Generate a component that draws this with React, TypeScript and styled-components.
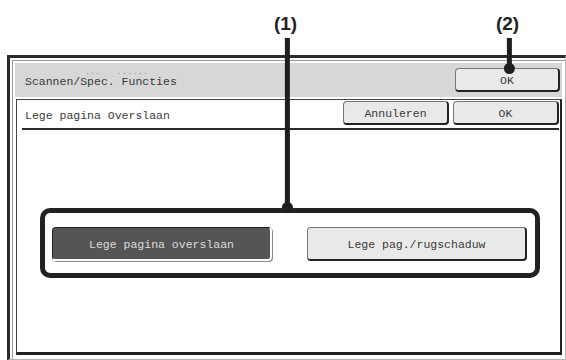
import styled, { createGlobalStyle, css } from "styled-components";

const Global = createGlobalStyle`
  html, body {
    margin: 0;
    padding: 0;
    background: #ffffff;
  }
  body {
    width: 566px;
    height: 360px;
    overflow: hidden;
    font-family: "Liberation Mono", "DejaVu Sans Mono", monospace;
    color: #3a3a3a;
  }
`;

const Page = styled.div`
  position: relative;
  width: 566px;
  height: 360px;
  padding: 55px 0 0 7px;
  box-sizing: border-box;
`;

const Frame = styled.div`
  width: 559px;
  height: 305px;
  box-sizing: border-box;
  display: flex;
  flex-direction: column;
  gap: 2px;
  padding: 5px 3px 4px 5px;
  border-top: 3px solid #2b2b2b;
  border-left: 3px solid #2b2b2b;
  border-right: 1px solid #b5b5b5;
  border-bottom: 1px solid #b5b5b5;
  box-shadow: inset 2px 2px 0 #ffffff, inset 3px 3px 0 #9a9a9a;
`;

const Header = styled.div`
  height: 34px;
  flex: none;
  display: flex;
  align-items: center;
  justify-content: space-between;
  padding: 0 2px 0 10px;
  background: #d7d7d7;
`;

const Title = styled.div`
  display: flex;
  flex-direction: column;
  margin-top: -5px;
  font-size: 11.5px;
  line-height: 13px;
`;

const Ruby = styled.div`
  height: 7px;
  font-size: 8px;
  line-height: 7px;
  color: #8c8c8c;
  letter-spacing: 0.5px;
  white-space: pre;
  padding-left: 60px;
`;

const Button = styled.div<{ $w: number; $h: number; $dark?: boolean }>`
  width: ${(p) => p.$w}px;
  height: ${(p) => p.$h}px;
  box-sizing: border-box;
  display: flex;
  align-items: center;
  justify-content: center;
  padding-top: 2px;
  font-size: 11.5px;
  border-radius: 4px;
  ${(p) =>
    p.$dark
      ? css`
          background: #555555;
          color: #dcdcdc;
          border: 1px solid #222222;
          border-right: 2px solid #ffffff;
          border-bottom: 2px solid #ffffff;
          box-shadow: 1px 1px 0 #8a8a8a;
        `
      : css`
          background: #e9e9e9;
          color: #3a3a3a;
          border: 1px solid #777777;
          border-right: 2px solid #222222;
          border-bottom: 2px solid #222222;
        `}
`;

const Panel = styled.div`
  flex: 1;
  display: flex;
  flex-direction: column;
  margin-left: 1px;
  background: #ffffff;
  border-top: 1px solid #444444;
  border-left: 1px solid #444444;
  border-right: 2px solid #222222;
  border-bottom: 3px solid #222222;
`;

const PanelHead = styled.div`
  height: 27px;
  display: flex;
  align-items: flex-start;
  padding: 1px 1px 0 8px;
  gap: 4px;
  font-size: 11.5px;
`;

const PanelTitle = styled.div`
  flex: 1;
  padding-top: 3px;
  line-height: 24px;
`;

const Rule = styled.div`
  height: 2px;
  margin: 0 1px 0 5px;
  background: #2a2a2a;
`;

const Body = styled.div`
  flex: 1;
  display: flex;
  align-items: center;
  justify-content: center;
  padding: 4px 0 0 3px;
`;

const Group = styled.div`
  display: flex;
  gap: 35px;
  padding: 14px 8px 12px 7px;
  border: 5px solid #222222;
  border-radius: 10px;
`;

const Callout = styled.div<{ $x: number }>`
  position: absolute;
  top: 14px;
  left: ${(p) => p.$x}px;
  transform: translateX(-50%);
  display: flex;
  flex-direction: column;
  align-items: center;
`;

const Label = styled.div`
  font-family: "Liberation Sans", Arial, sans-serif;
  font-weight: bold;
  font-size: 19px;
  line-height: 20px;
  color: #222222;
  margin-bottom: 4px;
  margin-right: 3px;
`;

const Stem = styled.div<{ $h: number }>`
  width: 5px;
  height: ${(p) => p.$h}px;
  background: #1e1e1e;
`;

const Dot = styled.div`
  width: 11px;
  height: 11px;
  margin-top: -5px;
  border-radius: 50%;
  background: #1e1e1e;
`;

export default function App() {
  return (
    <Page>
      <Global />
      <Frame>
        <Header>
          <Title>
            <Ruby>{"...   ......"}</Ruby>
            <span>Scannen/Spec. Functies</span>
          </Title>
          <Button $w={105} $h={24}>OK</Button>
        </Header>
        <Panel>
          <PanelHead>
            <PanelTitle>Lege pagina Overslaan</PanelTitle>
            <Button $w={106} $h={24}>Annuleren</Button>
            <Button $w={106} $h={24}>OK</Button>
          </PanelHead>
          <Rule />
          <Body>
            <Group>
              <Button $w={220} $h={34} $dark>
                Lege pagina overslaan
              </Button>
              <Button $w={220} $h={34}>
                Lege pag./rugschaduw
              </Button>
            </Group>
          </Body>
        </Panel>
      </Frame>
      <Callout $x={287}>
        <Label>(1)</Label>
        <Stem $h={169} />
        <Dot />
      </Callout>
      <Callout $x={509}>
        <Label>(2)</Label>
        <Stem $h={30} />
        <Dot />
      </Callout>
    </Page>
  );
}
